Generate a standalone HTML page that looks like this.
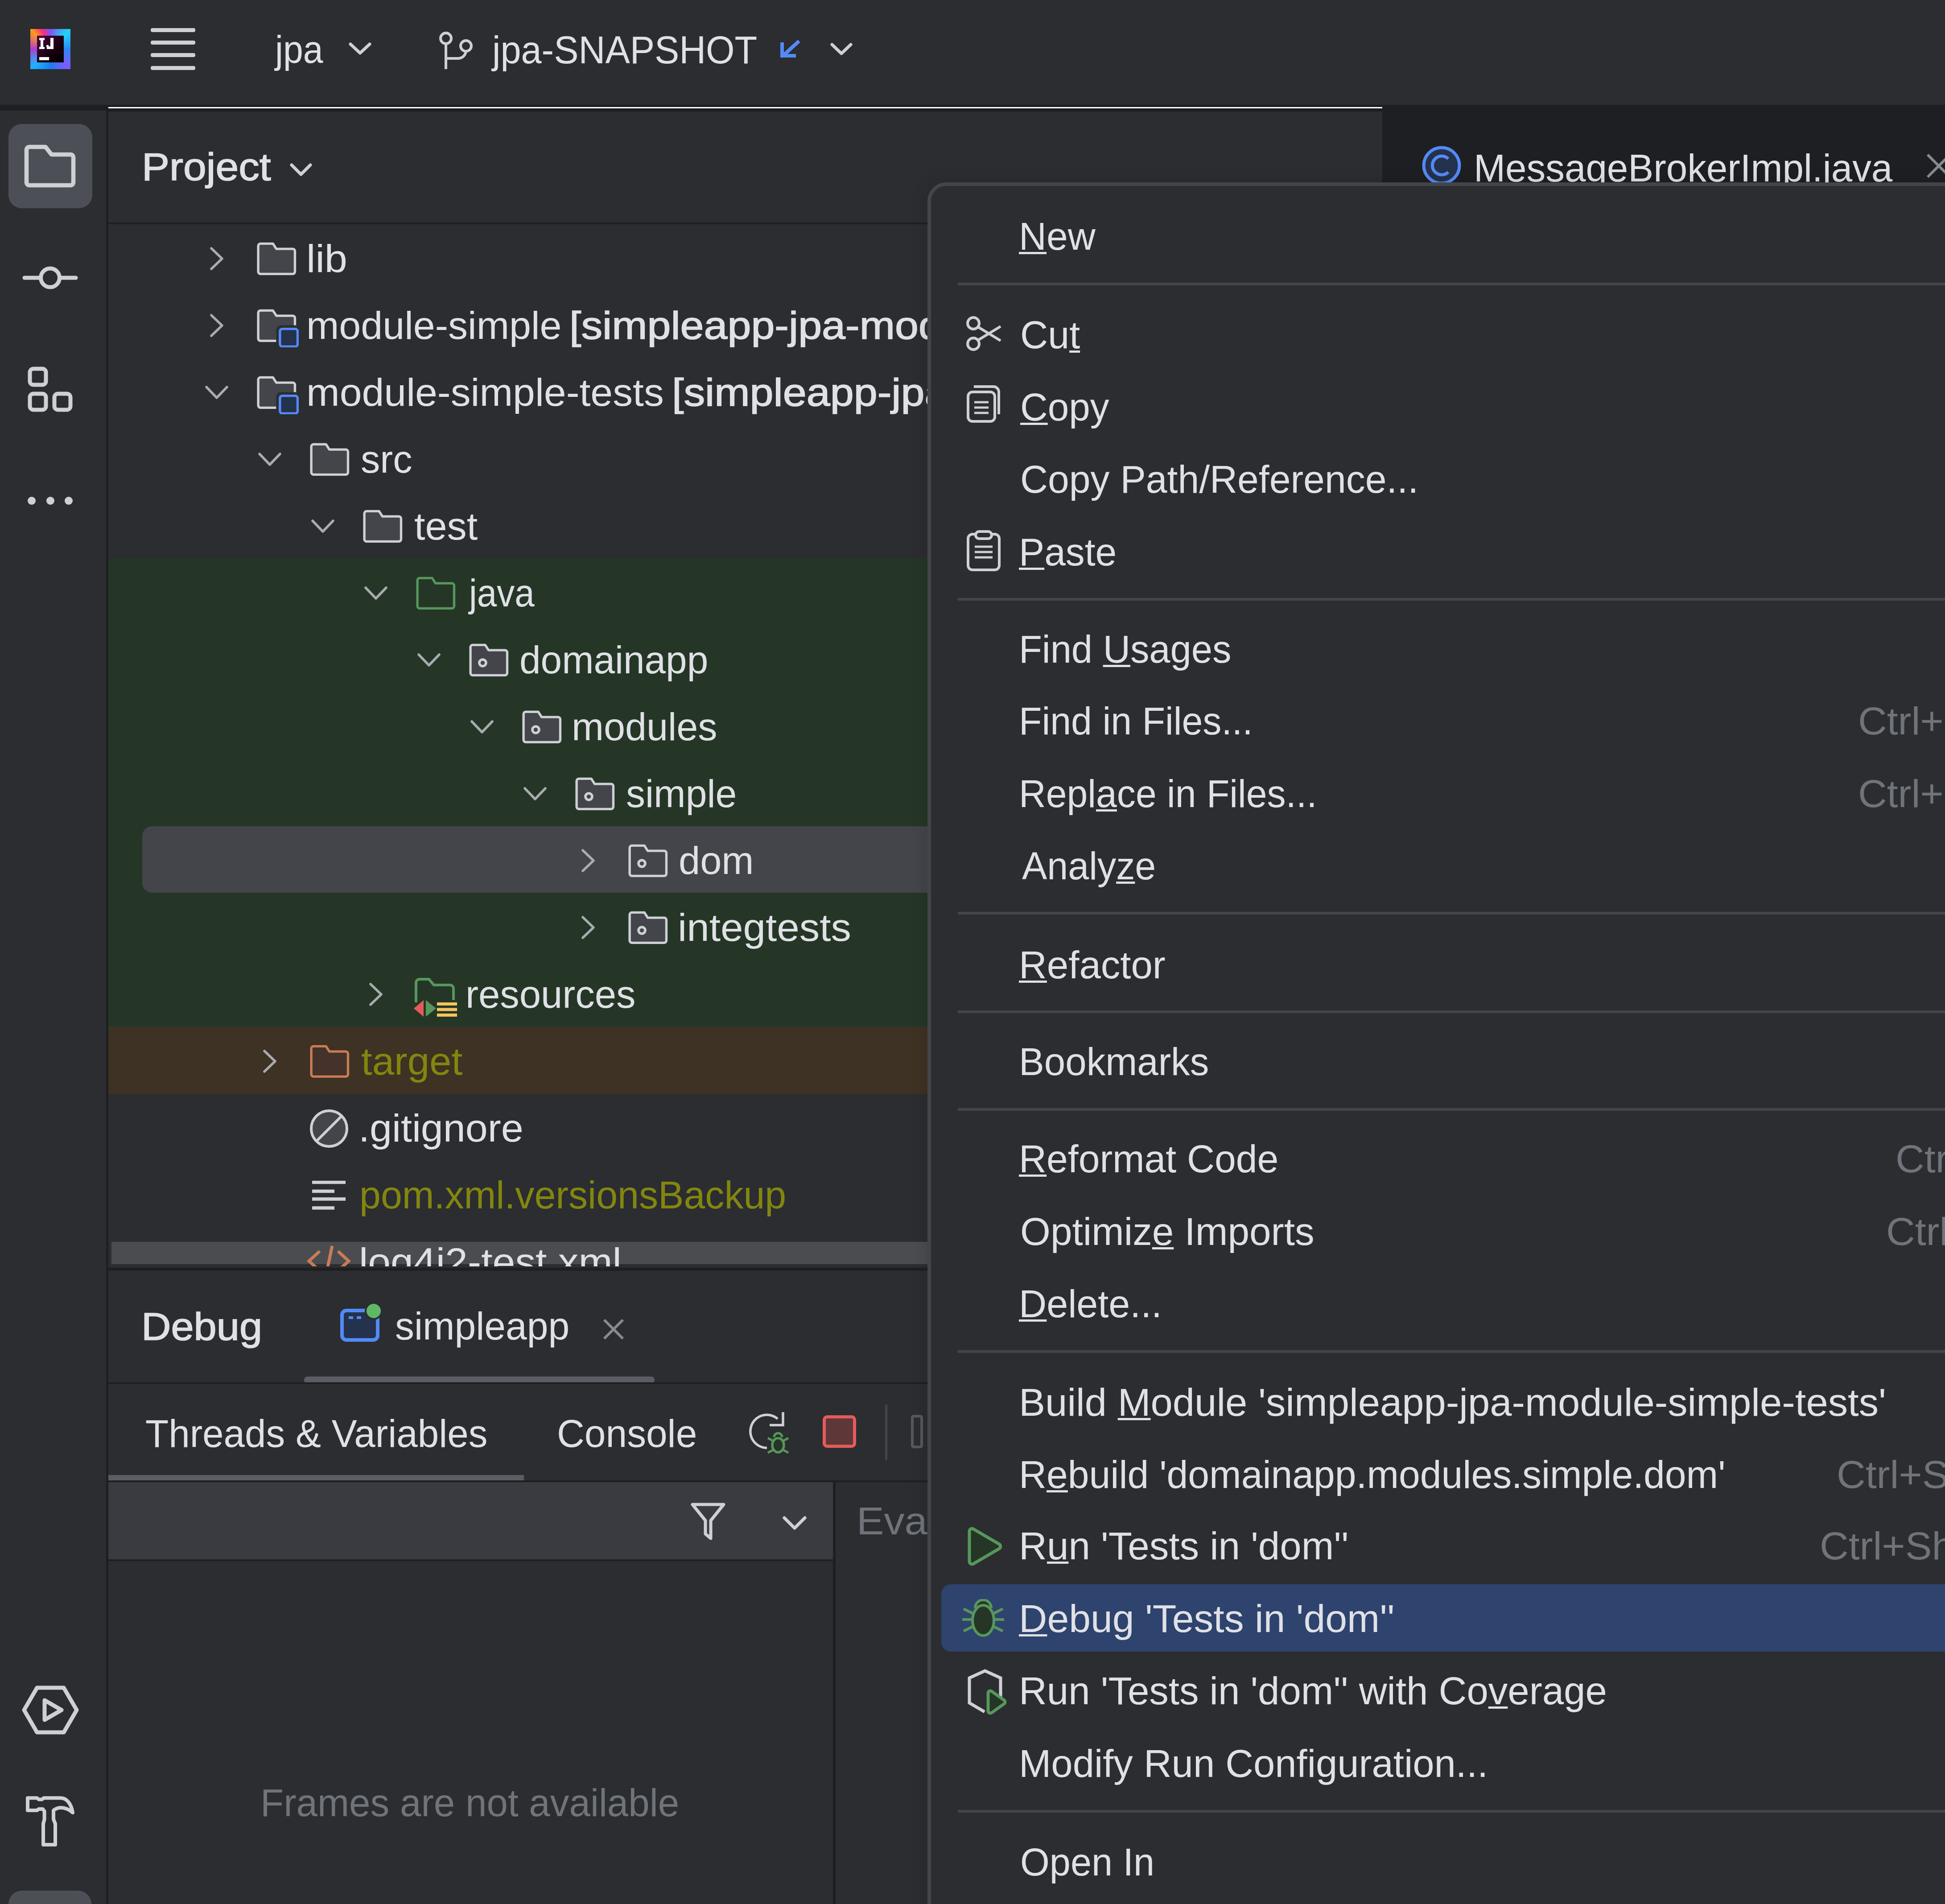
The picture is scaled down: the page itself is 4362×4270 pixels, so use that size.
<!DOCTYPE html>
<html><head><meta charset="utf-8"><style>
html,body{margin:0;padding:0}
body{width:4362px;height:4270px;overflow:hidden;position:relative;background:#2b2d30;font-family:"Liberation Sans",sans-serif}
body div, body svg{position:absolute}
.t{white-space:pre;line-height:1;transform-origin:0 0}
.clip{overflow:hidden}
u{text-decoration:underline;text-decoration-thickness:5px;text-underline-offset:5px}
</style></head><body>
<div style="left:0px;top:0px;width:4362px;height:235px;background:#2b2d30;"></div>
<div style="left:0px;top:235px;width:4362px;height:15px;background:#1e1f22;"></div>
<div style="left:243px;top:240px;width:2857px;height:3px;background:#ffffff;"></div>
<div style="left:0px;top:248px;width:238px;height:4022px;background:#2b2d30;"></div>
<div style="left:238px;top:235px;width:5px;height:4035px;background:#1e1f22;"></div>
<div style="left:243px;top:250px;width:2857px;height:2593px;background:#2b2d30;"></div>
<div style="left:243px;top:499px;width:2857px;height:4px;background:#1e1f22;"></div>
<div style="left:3100px;top:235px;width:1262px;height:4035px;background:#1e1f22;"></div>
<div style="left:68px;top:65px;width:90px;height:90px;background:conic-gradient(from 0deg at 50% 50%, #7a55f0 0deg, #22d3f5 45deg, #2a88f8 90deg, #7b5cff 135deg, #1a7cf0 180deg, #1fb2ff 225deg, #b03ad0 270deg, #ff9a1a 315deg, #ff2d7a 335deg, #7a55f0 360deg)"></div>
<div style="left:83px;top:80px;width:60px;height:60px;background:linear-gradient(135deg,#4e0040 0%,#1a0012 55%,#000 100%)"></div>
<div style="left:88px;top:85px;width:12px;height:5px;background:#ffffff;"></div>
<div style="left:91px;top:85px;width:6px;height:25px;background:#ffffff;"></div>
<div style="left:88px;top:105px;width:12px;height:5px;background:#ffffff;"></div>
<div style="left:113px;top:85px;width:7px;height:25px;background:#ffffff;"></div>
<div style="left:105px;top:104px;width:15px;height:6px;background:#ffffff;"></div>
<div style="left:104px;top:101px;width:5px;height:5px;background:#ffffff;"></div>
<div style="left:88px;top:128px;width:22px;height:7px;background:#ffffff;"></div>
<div style="left:338px;top:63px;width:100px;height:9px;background:#ced0d6;border-radius:4px"></div>
<div style="left:338px;top:91px;width:100px;height:9px;background:#ced0d6;border-radius:4px"></div>
<div style="left:338px;top:119px;width:100px;height:9px;background:#ced0d6;border-radius:4px"></div>
<div style="left:338px;top:148px;width:100px;height:9px;background:#ced0d6;border-radius:4px"></div>
<div class="t" style="left:616.8px;top:67.4px;font-size:87px;color:#dfe1e5;transform:scaleX(0.9272);">jpa</div>
<svg style="left:782px;top:95px;" width="51" height="28" viewBox="0 0 51 28" fill="none"><path d="M4 4 L25.5 24 L47 4" stroke="#ced0d6" stroke-width="7" stroke-linecap="round" stroke-linejoin="round"/></svg>
<svg style="left:981px;top:67px;" width="85" height="95" viewBox="0 0 85 95" fill="none"><circle cx="19" cy="19" r="12" stroke="#ced0d6" stroke-width="6"/><circle cx="64" cy="36" r="12" stroke="#ced0d6" stroke-width="6"/><path d="M19 31 V88 M19 64 H46 a18 18 0 0 0 18 -16" stroke="#ced0d6" stroke-width="6"/></svg>
<div class="t" style="left:1103.9px;top:68.4px;font-size:87px;color:#dfe1e5;transform:scaleX(0.9528);">jpa-SNAPSHOT</div>
<svg style="left:1745px;top:85px;" width="52" height="50" viewBox="0 0 52 50" fill="none"><path d="M47 7 L12 39 M9 10 V40 H40" stroke="#548af7" stroke-width="8" stroke-linejoin="miter"/></svg>
<svg style="left:1862px;top:96px;" width="50" height="28" viewBox="0 0 50 28" fill="none"><path d="M4 4 L25 24 L46 4" stroke="#ced0d6" stroke-width="7" stroke-linecap="round" stroke-linejoin="round"/></svg>
<div style="left:19px;top:278px;width:188px;height:189px;background:#4c4f56;border-radius:30px"></div>
<svg style="left:50px;top:318px;" width="126" height="106" viewBox="0 0 126 106" fill="none"><path d="M9.5 18 A6.5 6.5 0 0 1 16 11.5 H52 L65.5 28.5 H108 A6.5 6.5 0 0 1 114.5 35 V91 A6.5 6.5 0 0 1 108 97.5 H16 A6.5 6.5 0 0 1 9.5 91 Z" stroke="#ced0d6" stroke-width="9.5" stroke-linejoin="round"/></svg>
<svg style="left:45px;top:590px;" width="135" height="66" viewBox="0 0 135 66" fill="none"><circle cx="67.5" cy="33" r="21" stroke="#ced0d6" stroke-width="9"/><path d="M10 33 H46 M89 33 H125" stroke="#ced0d6" stroke-width="9" stroke-linecap="round"/></svg>
<svg style="left:58px;top:818px;" width="112" height="110" viewBox="0 0 112 110" fill="none"><rect x="9" y="9" width="36" height="36" rx="8" stroke="#ced0d6" stroke-width="9"/><rect x="9" y="65" width="36" height="36" rx="8" stroke="#ced0d6" stroke-width="9"/><rect x="64" y="65" width="36" height="36" rx="8" stroke="#ced0d6" stroke-width="9"/></svg>
<div style="left:62px;top:1114px;width:18px;height:18px;border-radius:50%;background:#ced0d6"></div>
<div style="left:104px;top:1114px;width:18px;height:18px;border-radius:50%;background:#ced0d6"></div>
<div style="left:145px;top:1114px;width:18px;height:18px;border-radius:50%;background:#ced0d6"></div>
<svg style="left:48px;top:3777px;" width="130" height="116" viewBox="0 0 130 116" fill="none"><path d="M35 8 H95 L124 58 L95 108 H35 L6 58 Z" stroke="#ced0d6" stroke-width="9" stroke-linejoin="round"/><path d="M52 36 V80 L90 58 Z" stroke="#ced0d6" stroke-width="9" stroke-linejoin="round"/></svg>
<svg style="left:50px;top:4020px;" width="130" height="130" viewBox="0 0 130 130" fill="none"><path d="M12 12.3 H33 L37 15.5 H44 L48 12.3 H86 C100 12.3 110 26 113 45 C105 38 97 34 86 34 C79 34 74 37 70 40 V60 L74 70 V117 H47 V70 L49.6 60 V42 L46 37 H37 L33 40 H12 Z" stroke="#ced0d6" stroke-width="8" stroke-linejoin="round"/></svg>
<div style="left:19px;top:4240px;width:186px;height:60px;background:#4c4f56;border-radius:30px"></div>
<div class="t" style="left:317.5px;top:330.4px;font-size:87px;color:#dfe1e5;-webkit-text-stroke:1.6px #dfe1e5;transform:scaleX(1.0698);">Project</div>
<svg style="left:650px;top:366px;" width="50" height="30" viewBox="0 0 50 30" fill="none"><path d="M4 4 L25 25 L46 4" stroke="#ced0d6" stroke-width="7" stroke-linecap="round" stroke-linejoin="round"/></svg>
<div style="left:243px;top:1252px;width:1837px;height:1050px;background:#253627;"></div>
<div style="left:243px;top:2302px;width:1837px;height:151px;background:#3d3223;"></div>
<div style="left:319px;top:1853px;width:1780px;height:149px;background:#43454a;border-radius:22px"></div>
<svg style="left:469px;top:553px;" width="34" height="54" viewBox="0 0 34 54" fill="none"><path d="M5 4 L29 27 L5 50" stroke="#a8abb0" stroke-width="5.5" stroke-linecap="round" stroke-linejoin="round"/></svg>
<svg style="left:569.7px;top:530.7px" width="100.6" height="98.7" viewBox="0 0 16 16" fill="none" preserveAspectRatio="none"><path d="M1.45 3.3 A0.8 0.8 0 0 1 2.25 2.5 H6.7 L7.9 4.4 H13.75 A0.8 0.8 0 0 1 14.55 5.2 V12.7 A0.8 0.8 0 0 1 13.75 13.5 H2.25 A0.8 0.8 0 0 1 1.45 12.7 Z" fill="#43454a" stroke="#ced0d6" stroke-width="0.85" stroke-linejoin="round"/></svg>
<div class="t" style="left:686.7px;top:536.4px;font-size:87px;color:#dfe1e5;transform:scaleX(1.0552);">lib</div>
<svg style="left:469px;top:703px;" width="34" height="54" viewBox="0 0 34 54" fill="none"><path d="M5 4 L29 27 L5 50" stroke="#a8abb0" stroke-width="5.5" stroke-linecap="round" stroke-linejoin="round"/></svg>
<svg style="left:569.7px;top:680.7px" width="100.6" height="98.7" viewBox="0 0 16 16" fill="none" preserveAspectRatio="none"><path d="M1.45 3.3 A0.8 0.8 0 0 1 2.25 2.5 H6.7 L7.9 4.4 H13.75 A0.8 0.8 0 0 1 14.55 5.2 V12.7 A0.8 0.8 0 0 1 13.75 13.5 H2.25 A0.8 0.8 0 0 1 1.45 12.7 Z" fill="#43454a" stroke="#ced0d6" stroke-width="0.85" stroke-linejoin="round"/><path d="M8.3 16 V9.6 A1.3 1.3 0 0 1 9.6 8.3 H15" stroke="#2b2d30" stroke-width="0.9"/><rect x="9.2" y="9.2" width="6.3" height="6.4" rx="0.9" fill="#25324d" stroke="#548af7" stroke-width="0.85" /></svg>
<div class="t" style="left:686.9px;top:686.4px;font-size:87px;color:#dfe1e5;transform:scaleX(1.0120);">module-simple</div>
<div class="t" style="left:1277.4px;top:686.4px;font-size:87px;color:#dfe1e5;-webkit-text-stroke:1.6px #dfe1e5;transform:scaleX(1.0941);">[simpleapp-jpa-module-simple]</div>
<svg style="left:459px;top:863px;" width="54" height="34" viewBox="0 0 54 34" fill="none"><path d="M4 5 L27 29 L50 5" stroke="#a8abb0" stroke-width="5.5" stroke-linecap="round" stroke-linejoin="round"/></svg>
<svg style="left:569.7px;top:830.7px" width="100.6" height="98.7" viewBox="0 0 16 16" fill="none" preserveAspectRatio="none"><path d="M1.45 3.3 A0.8 0.8 0 0 1 2.25 2.5 H6.7 L7.9 4.4 H13.75 A0.8 0.8 0 0 1 14.55 5.2 V12.7 A0.8 0.8 0 0 1 13.75 13.5 H2.25 A0.8 0.8 0 0 1 1.45 12.7 Z" fill="#43454a" stroke="#ced0d6" stroke-width="0.85" stroke-linejoin="round"/><path d="M8.3 16 V9.6 A1.3 1.3 0 0 1 9.6 8.3 H15" stroke="#2b2d30" stroke-width="0.9"/><rect x="9.2" y="9.2" width="6.3" height="6.4" rx="0.9" fill="#25324d" stroke="#548af7" stroke-width="0.85" /></svg>
<div class="t" style="left:686.9px;top:836.4px;font-size:87px;color:#dfe1e5;transform:scaleX(1.0299);">module-simple-tests</div>
<div class="t" style="left:1507.4px;top:836.4px;font-size:87px;color:#dfe1e5;-webkit-text-stroke:1.6px #dfe1e5;transform:scaleX(1.0949);">[simpleapp-jpa-module-simple-tests]</div>
<svg style="left:578px;top:1013px;" width="54" height="34" viewBox="0 0 54 34" fill="none"><path d="M4 5 L27 29 L50 5" stroke="#a8abb0" stroke-width="5.5" stroke-linecap="round" stroke-linejoin="round"/></svg>
<svg style="left:688.7px;top:980.7px" width="100.6" height="98.7" viewBox="0 0 16 16" fill="none" preserveAspectRatio="none"><path d="M1.45 3.3 A0.8 0.8 0 0 1 2.25 2.5 H6.7 L7.9 4.4 H13.75 A0.8 0.8 0 0 1 14.55 5.2 V12.7 A0.8 0.8 0 0 1 13.75 13.5 H2.25 A0.8 0.8 0 0 1 1.45 12.7 Z" fill="#43454a" stroke="#ced0d6" stroke-width="0.85" stroke-linejoin="round"/></svg>
<div class="t" style="left:809.0px;top:986.4px;font-size:87px;color:#dfe1e5;transform:scaleX(0.9958);">src</div>
<svg style="left:697px;top:1163px;" width="54" height="34" viewBox="0 0 54 34" fill="none"><path d="M4 5 L27 29 L50 5" stroke="#a8abb0" stroke-width="5.5" stroke-linecap="round" stroke-linejoin="round"/></svg>
<svg style="left:807.7px;top:1130.7px" width="100.6" height="98.7" viewBox="0 0 16 16" fill="none" preserveAspectRatio="none"><path d="M1.45 3.3 A0.8 0.8 0 0 1 2.25 2.5 H6.7 L7.9 4.4 H13.75 A0.8 0.8 0 0 1 14.55 5.2 V12.7 A0.8 0.8 0 0 1 13.75 13.5 H2.25 A0.8 0.8 0 0 1 1.45 12.7 Z" fill="#43454a" stroke="#ced0d6" stroke-width="0.85" stroke-linejoin="round"/></svg>
<div class="t" style="left:929.0px;top:1136.4px;font-size:87px;color:#dfe1e5;transform:scaleX(1.0140);">test</div>
<svg style="left:816px;top:1313px;" width="54" height="34" viewBox="0 0 54 34" fill="none"><path d="M4 5 L27 29 L50 5" stroke="#a8abb0" stroke-width="5.5" stroke-linecap="round" stroke-linejoin="round"/></svg>
<svg style="left:926.7px;top:1280.7px" width="100.6" height="98.7" viewBox="0 0 16 16" fill="none" preserveAspectRatio="none"><path d="M1.45 3.3 A0.8 0.8 0 0 1 2.25 2.5 H6.7 L7.9 4.4 H13.75 A0.8 0.8 0 0 1 14.55 5.2 V12.7 A0.8 0.8 0 0 1 13.75 13.5 H2.25 A0.8 0.8 0 0 1 1.45 12.7 Z" fill="#253627" stroke="#57965c" stroke-width="0.85" stroke-linejoin="round"/></svg>
<div class="t" style="left:1051.8px;top:1286.4px;font-size:87px;color:#dfe1e5;transform:scaleX(0.9190);">java</div>
<svg style="left:935px;top:1463px;" width="54" height="34" viewBox="0 0 54 34" fill="none"><path d="M4 5 L27 29 L50 5" stroke="#a8abb0" stroke-width="5.5" stroke-linecap="round" stroke-linejoin="round"/></svg>
<svg style="left:1045.7px;top:1430.7px" width="100.6" height="98.7" viewBox="0 0 16 16" fill="none" preserveAspectRatio="none"><path d="M1.45 3.3 A0.8 0.8 0 0 1 2.25 2.5 H6.7 L7.9 4.4 H13.75 A0.8 0.8 0 0 1 14.55 5.2 V12.7 A0.8 0.8 0 0 1 13.75 13.5 H2.25 A0.8 0.8 0 0 1 1.45 12.7 Z" fill="#43454a" stroke="#ced0d6" stroke-width="0.85" stroke-linejoin="round"/><circle cx="5.8" cy="9.0" r="1.2" stroke="#ced0d6" stroke-width="0.9"/></svg>
<div class="t" style="left:1165.1px;top:1436.4px;font-size:87px;color:#dfe1e5;transform:scaleX(0.9832);">domainapp</div>
<svg style="left:1054px;top:1613px;" width="54" height="34" viewBox="0 0 54 34" fill="none"><path d="M4 5 L27 29 L50 5" stroke="#a8abb0" stroke-width="5.5" stroke-linecap="round" stroke-linejoin="round"/></svg>
<svg style="left:1164.7px;top:1580.7px" width="100.6" height="98.7" viewBox="0 0 16 16" fill="none" preserveAspectRatio="none"><path d="M1.45 3.3 A0.8 0.8 0 0 1 2.25 2.5 H6.7 L7.9 4.4 H13.75 A0.8 0.8 0 0 1 14.55 5.2 V12.7 A0.8 0.8 0 0 1 13.75 13.5 H2.25 A0.8 0.8 0 0 1 1.45 12.7 Z" fill="#43454a" stroke="#ced0d6" stroke-width="0.85" stroke-linejoin="round"/><circle cx="5.8" cy="9.0" r="1.2" stroke="#ced0d6" stroke-width="0.9"/></svg>
<div class="t" style="left:1282.0px;top:1586.4px;font-size:87px;color:#dfe1e5;transform:scaleX(0.9927);">modules</div>
<svg style="left:1173px;top:1763px;" width="54" height="34" viewBox="0 0 54 34" fill="none"><path d="M4 5 L27 29 L50 5" stroke="#a8abb0" stroke-width="5.5" stroke-linecap="round" stroke-linejoin="round"/></svg>
<svg style="left:1283.7px;top:1730.7px" width="100.6" height="98.7" viewBox="0 0 16 16" fill="none" preserveAspectRatio="none"><path d="M1.45 3.3 A0.8 0.8 0 0 1 2.25 2.5 H6.7 L7.9 4.4 H13.75 A0.8 0.8 0 0 1 14.55 5.2 V12.7 A0.8 0.8 0 0 1 13.75 13.5 H2.25 A0.8 0.8 0 0 1 1.45 12.7 Z" fill="#43454a" stroke="#ced0d6" stroke-width="0.85" stroke-linejoin="round"/><circle cx="5.8" cy="9.0" r="1.2" stroke="#ced0d6" stroke-width="0.9"/></svg>
<div class="t" style="left:1404.0px;top:1736.4px;font-size:87px;color:#dfe1e5;transform:scaleX(0.9877);">simple</div>
<svg style="left:1302px;top:1903px;" width="34" height="54" viewBox="0 0 34 54" fill="none"><path d="M5 4 L29 27 L5 50" stroke="#a8abb0" stroke-width="5.5" stroke-linecap="round" stroke-linejoin="round"/></svg>
<svg style="left:1402.7px;top:1880.7px" width="100.6" height="98.7" viewBox="0 0 16 16" fill="none" preserveAspectRatio="none"><path d="M1.45 3.3 A0.8 0.8 0 0 1 2.25 2.5 H6.7 L7.9 4.4 H13.75 A0.8 0.8 0 0 1 14.55 5.2 V12.7 A0.8 0.8 0 0 1 13.75 13.5 H2.25 A0.8 0.8 0 0 1 1.45 12.7 Z" fill="#43454a" stroke="#ced0d6" stroke-width="0.85" stroke-linejoin="round"/><circle cx="5.8" cy="9.0" r="1.2" stroke="#ced0d6" stroke-width="0.9"/></svg>
<div class="t" style="left:1522.0px;top:1886.4px;font-size:87px;color:#dfe1e5;transform:scaleX(0.9952);">dom</div>
<svg style="left:1302px;top:2053px;" width="34" height="54" viewBox="0 0 34 54" fill="none"><path d="M5 4 L29 27 L5 50" stroke="#a8abb0" stroke-width="5.5" stroke-linecap="round" stroke-linejoin="round"/></svg>
<svg style="left:1402.7px;top:2030.7px" width="100.6" height="98.7" viewBox="0 0 16 16" fill="none" preserveAspectRatio="none"><path d="M1.45 3.3 A0.8 0.8 0 0 1 2.25 2.5 H6.7 L7.9 4.4 H13.75 A0.8 0.8 0 0 1 14.55 5.2 V12.7 A0.8 0.8 0 0 1 13.75 13.5 H2.25 A0.8 0.8 0 0 1 1.45 12.7 Z" fill="#43454a" stroke="#ced0d6" stroke-width="0.85" stroke-linejoin="round"/><circle cx="5.8" cy="9.0" r="1.2" stroke="#ced0d6" stroke-width="0.9"/></svg>
<div class="t" style="left:1519.8px;top:2036.4px;font-size:87px;color:#dfe1e5;transform:scaleX(1.0442);">integtests</div>
<svg style="left:826px;top:2203px;" width="34" height="54" viewBox="0 0 34 54" fill="none"><path d="M5 4 L29 27 L5 50" stroke="#a8abb0" stroke-width="5.5" stroke-linecap="round" stroke-linejoin="round"/></svg>
<svg style="left:925px;top:2188px;" width="105" height="100" viewBox="0 0 105 100" fill="none"><path d="M8 60 V16 A8 8 0 0 1 16 8 H37 L48 21 H84 A8 8 0 0 1 92 29 V55" stroke="#57965c" stroke-width="6"/><path d="M25 55 V92 L3 73.5 Z" fill="#e55b5b"/><path d="M30 55 V92 L53 73.5 Z" fill="#57965c"/><path d="M55 63.5 H100 M55 76 H100 M55 88.5 H100" stroke="#f2c55c" stroke-width="7"/></svg>
<div class="t" style="left:1044.0px;top:2186.4px;font-size:87px;color:#dfe1e5;transform:scaleX(0.9987);">resources</div>
<svg style="left:588px;top:2353px;" width="34" height="54" viewBox="0 0 34 54" fill="none"><path d="M5 4 L29 27 L5 50" stroke="#a8abb0" stroke-width="5.5" stroke-linecap="round" stroke-linejoin="round"/></svg>
<svg style="left:688.7px;top:2330.7px" width="100.6" height="98.7" viewBox="0 0 16 16" fill="none" preserveAspectRatio="none"><path d="M1.45 3.3 A0.8 0.8 0 0 1 2.25 2.5 H6.7 L7.9 4.4 H13.75 A0.8 0.8 0 0 1 14.55 5.2 V12.7 A0.8 0.8 0 0 1 13.75 13.5 H2.25 A0.8 0.8 0 0 1 1.45 12.7 Z" fill="#45322b" stroke="#c77d55" stroke-width="0.85" stroke-linejoin="round"/></svg>
<div class="t" style="left:810.0px;top:2336.4px;font-size:87px;color:#83860f;transform:scaleX(1.0212);">target</div>
<svg style="left:694px;top:2487px;" width="88" height="88" viewBox="0 0 88 88" fill="none"><circle cx="44" cy="44" r="40" fill="#43454a" stroke="#ced0d6" stroke-width="6"/><path d="M17 71 L71 17" stroke="#ced0d6" stroke-width="6"/></svg>
<div class="t" style="left:803.8px;top:2486.4px;font-size:87px;color:#dfe1e5;transform:scaleX(1.0331);">.gitignore</div>
<svg style="left:700px;top:2648px;" width="76" height="66" viewBox="0 0 76 66" fill="none"><path d="M0 3.5 H75 M0 23.5 H50 M0 41 H75 M0 61 H50" stroke="#ced0d6" stroke-width="7.5"/></svg>
<div class="t" style="left:806.1px;top:2636.4px;font-size:87px;color:#83860f;transform:scaleX(0.9899);">pom.xml.versionsBackup</div>
<div style="left:250px;top:2785px;width:1830px;height:50px;background:#4b4c50;"></div>
<svg style="left:687px;top:2790px;" width="101" height="70" viewBox="0 0 101 70" fill="none"><path d="M30 16 L6 38 L30 60 M71 16 L95 38 L71 60 M58 4 L44 70" stroke="#c77d55" stroke-width="7"/></svg>
<div class="t" style="left:804.8px;top:2786.4px;font-size:87px;color:#dfe1e5;transform:scaleX(1.0499);">log4j2-test.xml</div>
<div style="left:243px;top:2840px;width:1837px;height:3px;background:#2b2d30;"></div>
<div style="left:243px;top:2843px;width:2857px;height:7px;background:#1e1f22;"></div>
<div style="left:243px;top:2850px;width:2857px;height:1420px;background:#2b2d30;"></div>
<div class="t" style="left:316.6px;top:2931.4px;font-size:87px;color:#dfe1e5;-webkit-text-stroke:1.6px #dfe1e5;transform:scaleX(1.0574);">Debug</div>
<svg style="left:760px;top:2915px;" width="100" height="100" viewBox="0 0 100 100" fill="none"><rect x="7" y="24" width="80" height="66" rx="10" fill="#25324d" stroke="#548af7" stroke-width="8"/><path d="M22 40 H32 M40 40 H50" stroke="#548af7" stroke-width="6"/><circle cx="78" cy="25" r="20" fill="#2b2d30"/><circle cx="78" cy="25" r="16" fill="#5fb865"/></svg>
<div class="t" style="left:886.0px;top:2930.4px;font-size:87px;color:#dfe1e5;transform:scaleX(0.9868);">simpleapp</div>
<svg style="left:1350px;top:2955px;" width="52" height="52" viewBox="0 0 52 52" fill="none"><path d="M5 5 L47 47 M47 5 L5 47" stroke="#868a91" stroke-width="6"/></svg>
<div style="left:682px;top:3087px;width:786px;height:16px;background:#5a5d63;border-radius:8px"></div>
<div style="left:243px;top:3100px;width:2857px;height:4px;background:#1e1f22;"></div>
<div class="t" style="left:326.0px;top:3171.4px;font-size:87px;color:#dfe1e5;transform:scaleX(0.9817);">Threads &amp; Variables</div>
<div class="t" style="left:1249.1px;top:3171.4px;font-size:87px;color:#dfe1e5;transform:scaleX(0.9846);">Console</div>
<svg style="left:1680px;top:3165px;" width="95" height="100" viewBox="0 0 95 100" fill="none"><path d="M64 17 A37 37 0 1 0 40 82" stroke="#ced0d6" stroke-width="5.5"/><path d="M76 2 V31 H46" stroke="#ced0d6" stroke-width="5.5"/><ellipse cx="65" cy="76" rx="13" ry="16" fill="#253627" stroke="#57965c" stroke-width="5.5"/><path d="M56 58 a9 9 0 0 1 18 0" fill="#253627" stroke="#57965c" stroke-width="5"/><path d="M42 60 L53 66 M88 60 L77 66 M42 93 L53 87 M88 93 L77 87" stroke="#57965c" stroke-width="5"/></svg>
<div style="left:1845px;top:3174px;width:75px;height:73px;background:#5e3838;border:7px solid #e55b5b;border-radius:10px;box-sizing:border-box"></div>
<div style="left:1985px;top:3150px;width:5px;height:124px;background:#43454a;"></div>
<div style="left:2043px;top:3173px;width:27px;height:75px;background:transparent;border:6px solid #55585e;border-radius:6px;box-sizing:border-box"></div>
<div style="left:243px;top:3308px;width:932px;height:15px;background:#5a5d63;"></div>
<div style="left:243px;top:3320px;width:2857px;height:4px;background:#1e1f22;"></div>
<div style="left:243px;top:3324px;width:1625px;height:173px;background:#393b40;"></div>
<div style="left:243px;top:3497px;width:1625px;height:4px;background:#1e1f22;"></div>
<div style="left:1868px;top:3324px;width:6px;height:946px;background:#1e1f22;"></div>
<svg style="left:1548px;top:3368px;" width="80" height="88" viewBox="0 0 80 88" fill="none"><path d="M5 6 H75 L46 42 V82 L34 72 V42 Z" stroke="#ced0d6" stroke-width="7" stroke-linejoin="round"/></svg>
<svg style="left:1755px;top:3400px;" width="54" height="32" viewBox="0 0 54 32" fill="none"><path d="M4 4 L27 27 L50 4" stroke="#ced0d6" stroke-width="7" stroke-linecap="round" stroke-linejoin="round"/></svg>
<div class="t" style="left:1920.6px;top:3367.4px;font-size:87px;color:#6f737a;transform:scaleX(1.0600);">Evaluate</div>
<div class="t" style="left:584.1px;top:3999.4px;font-size:87px;color:#6f737a;transform:scaleX(0.9809);">Frames are not available</div>
<svg style="left:3188px;top:326px;" width="90" height="90" viewBox="0 0 90 90" fill="none"><circle cx="45" cy="45" r="40" fill="#25324d" stroke="#548af7" stroke-width="7"/><path d="M60 30 A21 21 0 1 0 60 60" stroke="#548af7" stroke-width="7"/></svg>
<div class="t" style="left:3305.1px;top:333.4px;font-size:87px;color:#dfe1e5;transform:scaleX(0.9811);">MessageBrokerImpl.java</div>
<svg style="left:4318px;top:342px;" width="60" height="60" viewBox="0 0 60 60" fill="none"><path d="M5 5 L55 55 M55 5 L5 55" stroke="#868a91" stroke-width="6"/></svg>
<div style="left:2080px;top:409px;width:2400px;height:4000px;background:#2b2d30;border:8px solid #43454a;border-radius:42px;box-sizing:border-box;box-shadow:0 0 40px rgba(0,0,0,0.14)"></div>
<div style="left:2111px;top:3553px;width:2400px;height:151px;background:#2e436e;border-radius:21px"></div>
<div class="t" style="left:2285.1px;top:486.4px;font-size:87px;color:#dfe1e5;transform:scaleX(0.9868);"><u>N</u>ew</div>
<div style="left:2148px;top:634px;width:2300px;height:6px;background:#43454a;"></div>
<div class="t" style="left:2288.0px;top:707.4px;font-size:87px;color:#dfe1e5;transform:scaleX(0.9907);">Cu<u>t</u></div>
<svg style="left:2164px;top:706px;" width="84" height="84" viewBox="0 0 84 84" fill="none"><circle cx="19" cy="19" r="13" stroke="#ced0d6" stroke-width="6"/><circle cx="19" cy="65" r="13" stroke="#ced0d6" stroke-width="6"/><path d="M29 27 L80 58 M29 57 L80 26" stroke="#ced0d6" stroke-width="6"/></svg>
<div class="t" style="left:2288.1px;top:869.4px;font-size:87px;color:#dfe1e5;transform:scaleX(0.9820);"><u>C</u>opy</div>
<svg style="left:2164px;top:862px;" width="84" height="90" viewBox="0 0 84 90" fill="none"><rect x="7" y="17" width="60" height="66" rx="10" stroke="#ced0d6" stroke-width="6"/><path d="M20 5 H64 a12 12 0 0 1 12 12 V67" stroke="#ced0d6" stroke-width="6"/><path d="M21 40 H53 M21 52 H53 M21 64 H53" stroke="#ced0d6" stroke-width="5"/></svg>
<div class="t" style="left:2288.0px;top:1031.4px;font-size:87px;color:#dfe1e5;transform:scaleX(0.9875);">Copy Path/Reference...</div>
<div class="t" style="left:2285.1px;top:1194.4px;font-size:87px;color:#dfe1e5;transform:scaleX(0.9855);"><u>P</u>aste</div>
<svg style="left:2164px;top:1186px;" width="84" height="98" viewBox="0 0 84 98" fill="none"><rect x="7" y="12" width="70" height="80" rx="10" stroke="#ced0d6" stroke-width="6"/><rect x="24" y="6" width="36" height="16" rx="8" fill="#2b2d30" stroke="#ced0d6" stroke-width="6"/><path d="M22 40 H62 M22 52 H62 M22 64 H62" stroke="#ced0d6" stroke-width="5"/></svg>
<div style="left:2148px;top:1341px;width:2300px;height:6px;background:#43454a;"></div>
<div class="t" style="left:2285.2px;top:1412.4px;font-size:87px;color:#dfe1e5;transform:scaleX(0.9752);">Find <u>U</u>sages</div>
<div class="t" style="left:2285.2px;top:1573.4px;font-size:87px;color:#dfe1e5;transform:scaleX(0.9690);">Find in Files...</div>
<div class="t" style="left:2285.2px;top:1736.4px;font-size:87px;color:#dfe1e5;transform:scaleX(0.9671);">Repl<u>a</u>ce in Files...</div>
<div class="t" style="left:2292.0px;top:1898.4px;font-size:87px;color:#dfe1e5;transform:scaleX(0.9702);">Analy<u>z</u>e</div>
<div style="left:2148px;top:2045px;width:2300px;height:6px;background:#43454a;"></div>
<div class="t" style="left:2285.0px;top:2120.4px;font-size:87px;color:#dfe1e5;"><u>R</u>efactor</div>
<div style="left:2148px;top:2266px;width:2300px;height:6px;background:#43454a;"></div>
<div class="t" style="left:2285.1px;top:2337.4px;font-size:87px;color:#dfe1e5;transform:scaleX(0.9797);">Bookmarks</div>
<div style="left:2148px;top:2485px;width:2300px;height:6px;background:#43454a;"></div>
<div class="t" style="left:2285.1px;top:2555.4px;font-size:87px;color:#dfe1e5;transform:scaleX(0.9870);"><u>R</u>eformat Code</div>
<div class="t" style="left:2288.0px;top:2718.4px;font-size:87px;color:#dfe1e5;transform:scaleX(1.0031);">Optimiz<u>e</u> Imports</div>
<div class="t" style="left:2285.1px;top:2880.4px;font-size:87px;color:#dfe1e5;transform:scaleX(0.9909);"><u>D</u>elete...</div>
<div style="left:2148px;top:3028px;width:2300px;height:6px;background:#43454a;"></div>
<div class="t" style="left:2284.9px;top:3101.4px;font-size:87px;color:#dfe1e5;transform:scaleX(1.0186);">Build <u>M</u>odule &#x27;simpleapp-jpa-module-simple-tests&#x27;</div>
<div class="t" style="left:2285.1px;top:3263.4px;font-size:87px;color:#dfe1e5;transform:scaleX(0.9873);">R<u>e</u>build &#x27;domainapp.modules.simple.dom&#x27;</div>
<div class="t" style="left:2285.0px;top:3423.4px;font-size:87px;color:#dfe1e5;transform:scaleX(1.0014);">R<u>u</u>n &#x27;Tests in &#x27;dom&#x27;&#x27;</div>
<svg style="left:2166px;top:3422px;" width="84" height="92" viewBox="0 0 84 92" fill="none"><path d="M8 12 a6 6 0 0 1 9 -5 L75 41 a6 6 0 0 1 0 10 L17 85 a6 6 0 0 1 -9 -5 Z" fill="#253627" stroke="#57965c" stroke-width="7" stroke-linejoin="round"/></svg>
<div class="t" style="left:2284.9px;top:3586.4px;font-size:87px;color:#dfe1e5;transform:scaleX(1.0088);"><u>D</u>ebug &#x27;Tests in &#x27;dom&#x27;&#x27;</div>
<svg style="left:2155px;top:3586px;" width="100" height="88" viewBox="0 0 100 88" fill="none"><path d="M32 20 a18 18 0 0 1 36 0" fill="#253627" stroke="#57965c" stroke-width="6"/><ellipse cx="50" cy="48" rx="24" ry="34" fill="#253627" stroke="#57965c" stroke-width="6"/><path d="M3 46 H26 M74 46 H97 M6 22 L26 32 M94 22 L74 32 M6 72 L26 62 M94 72 L74 62" stroke="#57965c" stroke-width="6"/></svg>
<div class="t" style="left:2285.0px;top:3748.4px;font-size:87px;color:#dfe1e5;">Run &#x27;Tests in &#x27;dom&#x27;&#x27; with Co<u>v</u>erage</div>
<svg style="left:2164px;top:3741px;" width="96" height="106" viewBox="0 0 96 106" fill="none"><path d="M44 98 L10 78 V22 L45 6 L80 22 V68" stroke="#ced0d6" stroke-width="7"/><path d="M52 56 a5 5 0 0 1 8 -4 L88 72 a5 5 0 0 1 0 8 L60 100 a5 5 0 0 1 -8 -4 Z" fill="#253627" stroke="#57965c" stroke-width="7" stroke-linejoin="round"/></svg>
<div class="t" style="left:2285.0px;top:3911.4px;font-size:87px;color:#dfe1e5;transform:scaleX(0.9981);">Modify Run Configuration...</div>
<div style="left:2148px;top:4059px;width:2300px;height:6px;background:#43454a;"></div>
<div class="t" style="left:2288.1px;top:4132.4px;font-size:87px;color:#dfe1e5;transform:scaleX(0.9728);">Open In</div>
<div class="t" style="left:4166.9px;top:1573.4px;font-size:87px;color:#6f737a;transform:scaleX(1.0300);">Ctrl+Shift+F</div>
<div class="t" style="left:4166.9px;top:1736.4px;font-size:87px;color:#6f737a;transform:scaleX(1.0300);">Ctrl+Shift+R</div>
<div class="t" style="left:4250.9px;top:2555.4px;font-size:87px;color:#6f737a;transform:scaleX(1.0300);">Ctrl+Alt+L</div>
<div class="t" style="left:4229.9px;top:2718.4px;font-size:87px;color:#6f737a;transform:scaleX(1.0300);">Ctrl+Alt+O</div>
<div class="t" style="left:4118.9px;top:3263.4px;font-size:87px;color:#6f737a;transform:scaleX(1.0300);">Ctrl+Shift+F9</div>
<div class="t" style="left:4080.9px;top:3423.4px;font-size:87px;color:#6f737a;transform:scaleX(1.0300);">Ctrl+Shift+F10</div>
</body></html>
